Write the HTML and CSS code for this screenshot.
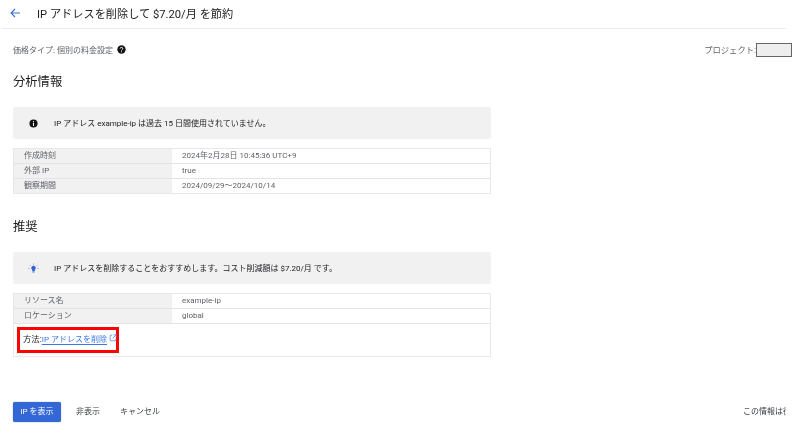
FILE: index.html
```html
<!DOCTYPE html>
<html lang="ja">
<head>
<meta charset="utf-8">
<title>IP アドレスを削除して $7.20/月 を節約</title>
<link rel="stylesheet" href="styles.css">
</head>
<body>
<div class="page">
  <header class="topbar">
    <svg class="back" viewBox="0 0 12 12" width="12" height="12"><path d="M11 6H2M6 2 2 6l4 4" fill="none" stroke="#3b6fd4" stroke-width="1.1"/></svg>
    <h1 class="title">IP アドレスを削除して $7.20/月 を節約</h1>
  </header>
  <main class="content">
    <div class="meta">
      <div class="price">価格タイプ: 個別の料金設定
        <svg class="help" viewBox="0 0 10 10" width="9" height="9"><circle cx="5" cy="5" r="4.6" fill="#111"/><path d="M3.5 4a1.5 1.4 0 1 1 2.2 1.2c-.5.3-.7.5-.7 1" fill="none" stroke="#fff" stroke-width="1"/><circle cx="5" cy="7.600" r=".6" fill="#fff"/></svg>
      </div>
      <div class="project"><span class="project-label">プロジェクト:</span><span class="project-box"></span></div>
    </div>
    <section class="column">
      <h2 class="heading first">分析情報</h2>
      <div class="notice">
        <span class="notice-slot"><svg viewBox="0 0 10 10" width="9" height="9"><circle cx="5" cy="5" r="4.5" fill="#111"/><rect x="4.400" y="4.300" width="1.200" height="3.400" fill="#fff"/><rect x="4.400" y="2.400" width="1.200" height="1.200" fill="#fff"/></svg></span>
        <span class="notice-text">IP アドレス example-ip は過去 15 日間使用されていません。</span>
      </div>
      <div class="table">
        <div class="row"><div class="key">作成時刻</div><div class="val">2024年2月28日 10:45:36 UTC+9</div></div>
        <div class="row"><div class="key">外部 IP</div><div class="val">true</div></div>
        <div class="row"><div class="key">観察期間</div><div class="val">2024/09/29～2024/10/14</div></div>
      </div>
      <h2 class="heading second">推奨</h2>
      <div class="notice">
        <span class="notice-slot"><svg viewBox="0 0 12 12" width="11" height="11"><path d="M6 3a2.400 2.400 0 0 0-1.400 4.400V8.600h2.800V7.400A2.400 2.400 0 0 0 6 3z" fill="#2f62d0"/><rect x="4.800" y="9.200" width="2.400" height="1.100" fill="#2f62d0"/><path d="M6 .6v1.300M1.800 2.300l.9.9M10.200 2.300l-.9.9M.4 6h1.300M10.300 6h1.300" stroke="#5f8be0" stroke-width=".8"/></svg></span>
        <span class="notice-text">IP アドレスを削除することをおすすめします。コスト削減額は $7.20/月 です。</span>
      </div>
      <div class="table">
        <div class="row"><div class="key">リソース名</div><div class="val">example-ip</div></div>
        <div class="row"><div class="key">ロケーション</div><div class="val">global</div></div>
        <div class="method">
          <div class="method-box">
            <span class="method-label">方法:</span><a class="method-link" href="#">IP アドレスを削除</a>
            <svg class="ext" viewBox="0 0 10 10" width="8" height="8"><path d="M4 1.500H1.500v7h7V6M5.500 1h3.500v3.500M9 1 4.500 5.500" fill="none" stroke="#5f8be0" stroke-width="1"/></svg>
          </div>
        </div>
      </div>
    </section>
    <footer class="actions">
      <div class="buttons">
        <button class="btn primary">IP を表示</button>
        <button class="btn plain hide">非表示</button>
        <button class="btn plain">キャンセル</button>
      </div>
      <div class="helpful">この情報は役</div>
    </footer>
  </main>
</div>
</body>
</html>
```
FILE: styles.css
```css
* { box-sizing: border-box; }
html, body { margin: 0; height: 100%; background: #fff; overflow: hidden; }
body { font-family: Roboto, "Noto Sans CJK JP", sans-serif; color: #3c4043; }
.page { width: 800px; height: 432px; display: flex; flex-direction: column; filter: blur(0.4px); }
.topbar { height: 29px; margin-right: 14px; margin-left: 2px; padding-left: 7px; display: flex; align-items: center; gap: 16px; border-bottom: 1px solid #ebebeb; flex: none; }
.back { flex: none; margin-top: -3px; }
.title { margin: -3px 0 0; font-size: 11.200px; font-weight: 400; color: #202124; white-space: nowrap; }
.content { flex: 1; padding: 0 8px 0 13px; display: flex; flex-direction: column; min-height: 0; }
.meta { display: flex; justify-content: space-between; align-items: flex-start; height: 28px; padding-top: 14px; font-size: 8px; color: #5f6368; }
.price { display: flex; align-items: center; gap: 4px; height: 12px; }
.project { display: flex; align-items: center; height: 14px; font-size: 8.300px; }
.project-label { margin-top: -3px; }
.project-box { display: block; width: 36px; height: 14px; background: #eee; border: 1px solid #666; }
.column { width: 478px; }
.heading { margin: 0; font-size: 12.300px; font-weight: 400; color: #202124; line-height: 18px; height: 18px; }
.heading.first { margin-top: 16px; margin-bottom: 16px; }
.heading.second { margin-top: 24px; margin-bottom: 16px; }
.notice { height: 32px; background: #f1f1f1; border-radius: 2px; display: flex; align-items: center; font-size: 8px; color: #202124; }
.notice-slot { flex: none; width: 41px; display: flex; justify-content: center; }
.notice-text { margin-top: -2px; }
.table { margin-top: 9px; border: 1px solid #e8e8e8; }
.row { display: flex; height: 15px; border-bottom: 1px solid #e4e4e4; font-size: 8px; line-height: 14px; }
.table > .row:last-child { height: 14px; border-bottom: 0; }
.key { width: 158px; background: #f1f1f1; padding-left: 10px; color: #5f6368; }
.val { padding-left: 10px; color: #5f6368; }
.method { height: 32px; padding: 3px 0 0 3px; }
.method-box { width: 102px; height: 26px; border: 3px solid #f00; display: flex; align-items: center; padding: 0 0 4px 3px; white-space: nowrap; font-size: 8px; }
.method-label { color: #202124; font-size: 8.400px; }
.method-link { color: #3b78e7; text-decoration: underline; text-underline-offset: 2px; }
.ext { flex: none; margin-left: 2px; margin-top: -1px; }
.actions { display: flex; justify-content: space-between; align-items: center; margin-top: 45px; height: 21px; transform: translateY(-1px); }
.buttons { display: flex; align-items: center; }
.btn { font-family: inherit; font-size: 8px; border: 0; background: none; padding: 0 0 2px; height: 20px; color: #3c4043; }
.btn.primary { width: 48px; background: #3367d6; color: #fff; border-radius: 2px; box-shadow: 0 0 1px #2a56b5; }
.btn.hide { margin: 0 20px 0 15px; }
.helpful { width: 43px; overflow: hidden; white-space: nowrap; font-size: 8px; color: #3c4043; margin-right: 6px; padding-bottom: 2px; }
```
